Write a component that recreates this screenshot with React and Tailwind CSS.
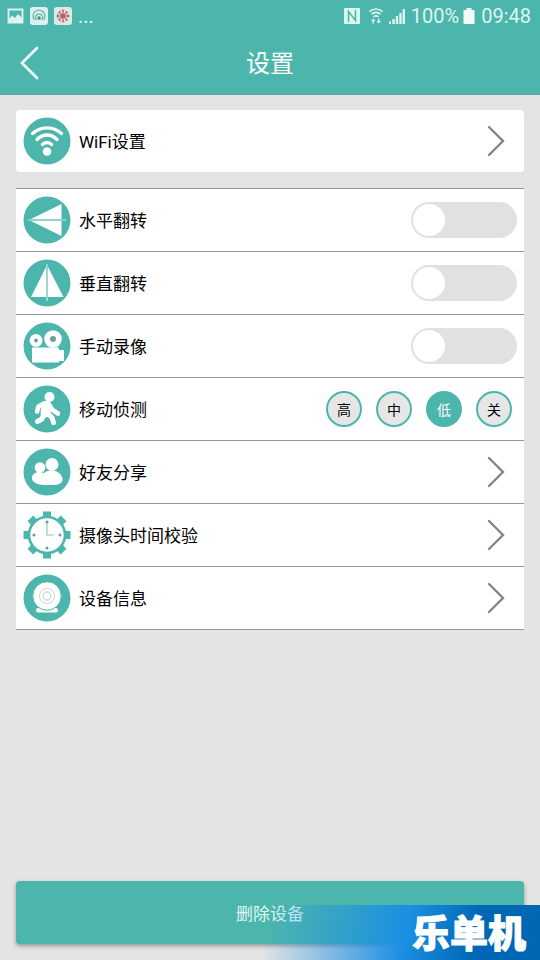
import { useState } from 'react';
import clsx from 'clsx';

const TEAL = '#4db6ac';

const Disc = ({ children }) => (
    <svg viewBox="0 0 48 48" className="size-12 shrink-0" aria-hidden="true">
        <circle cx="24" cy="24" r="23.5" fill={TEAL} />
        {children}
    </svg>
);

const WifiIcon = () => (
    <Disc>
        <g fill="none" stroke="#fff" strokeWidth="3.4" strokeLinecap="round">
            <path d="M9.5 16.5C18 9 30 9 38.5 16.5" />
            <path d="M14 22.5C20 16.500 28 16.500 34 22.500" />
            <path d="M19.500 27.500C22 24.800 26 24.800 28.500 27.500" />
        </g>
        <circle cx="24" cy="34.500" r="4.300" fill="#fff" />
    </Disc>
);

const FlipHorizontalIcon = () => (
    <Disc>
        <path d="M38.500 8V23H8zM38.500 40V25H8z" fill="#fff" />
        <path d="M5 24H43" stroke="#d5efec" strokeWidth="1" />
    </Disc>
);

const FlipVerticalIcon = () => (
    <Disc>
        <path d="M23 8V38H8zM25 8V38H40.500z" fill="#fff" />
        <path d="M24 5V42" stroke="#b9dedb" strokeWidth="1.600" />
    </Disc>
);

const RecordIcon = () => (
    <Disc>
        <circle cx="13" cy="18.500" r="6.500" fill="#fff" />
        <circle cx="30" cy="17" r="8.800" fill="#fff" />
        <circle cx="13" cy="18.500" r="1.900" fill="#6f9f9b" />
        <circle cx="30" cy="17" r="3" fill="#6f9f9b" />
        <path d="M9 25.500H36V28H41V39H36V40.500H9z" fill="#fff" />
    </Disc>
);

const MotionIcon = () => (
    <Disc>
        <circle cx="26.500" cy="12" r="5" fill="#fff" />
        <g fill="none" stroke="#fff" strokeLinecap="round" strokeLinejoin="round">
            <path d="M23.500 21L22.500 27.500" strokeWidth="10" />
            <path d="M21 18.500L15.500 21.500L14 26.500" strokeWidth="4.600" />
            <path d="M26 19.500L29.500 25L35 28.500" strokeWidth="4.600" />
            <path d="M20.500 29.500L19 34L14.500 36.500" strokeWidth="5" />
            <path d="M24.500 28.500L29 32.500L30.500 37.500" strokeWidth="5" />
        </g>
    </Disc>
);

const FriendsIcon = () => (
    <Disc>
        <circle cx="17" cy="19.500" r="5.300" fill="#fff" />
        <circle cx="29" cy="16.500" r="6.500" fill="#fff" />
        <path
            d="M9 30C9 26.500 12 24 16 24C18.500 24 20 25 21 25C23 23 26 22.500 29 22.500C35 22.500 39.500 27 39.500 31.500C39.500 35.500 35 37 30 37H21C13 36.500 9 34 9 30z"
            fill="#fff"
        />
    </Disc>
);

const ClockIcon = () => (
    <svg viewBox="0 0 48 48" className="size-12 shrink-0" aria-hidden="true">
        <g fill={TEAL}>
            {[0, 45, 90, 135, 180, 225, 270, 315].map((angle) => (
                <path key={angle} d="M20 .5H28V5L30.500 9H17.500L20 5z" transform={`rotate(${angle} 24 24)`} />
            ))}
        </g>
        <circle cx="24" cy="24" r="18" fill="#fff" stroke={TEAL} strokeWidth="2.600" />
        <g fill="#5f9f99">
            <circle cx="24" cy="11" r="1.500" />
            <circle cx="24" cy="37" r="1.500" />
            <circle cx="11" cy="24" r="1.500" />
            <circle cx="37" cy="24" r="1.500" />
        </g>
        <path d="M24 12V24H31" fill="none" stroke="#8ccbc5" strokeWidth="1.200" />
    </svg>
);

const CameraIcon = () => (
    <Disc>
        <rect x="13" y="34" width="22" height="4.500" rx="2.200" fill="#fff" />
        <circle cx="24" cy="22" r="14.300" fill="#fff" stroke={TEAL} strokeWidth="1" />
        <g fill="none" stroke="#cfd6d5">
            <circle cx="24" cy="22" r="7.500" strokeWidth="1" />
            <circle cx="24" cy="22" r="4" strokeWidth="1.300" />
        </g>
    </Disc>
);

const Chevron = () => (
    <svg viewBox="0 0 18 32" className="ml-auto mr-3 h-8 w-[18px]" aria-hidden="true">
        <path d="M2 2L16 16L2 30" fill="none" stroke="#858585" strokeWidth="2.400" strokeLinecap="round" />
    </svg>
);

const LinkRow = ({ icon: Icon, label }) => (
    <button type="button" className="flex h-full w-full items-center gap-2 px-[7px] text-left">
        <Icon />
        <span className="pt-[2px]">{label}</span>
        <Chevron />
    </button>
);

const SwitchRow = ({ icon: Icon, label }) => {
    const [on, setOn] = useState(false);

    return (
        <label className="flex h-full items-center gap-2 px-[7px]">
            <Icon />
            <span className="pt-[2px]">{label}</span>
            <input
                type="checkbox"
                role="switch"
                checked={on}
                onChange={() => setOn(!on)}
                className="ml-auto flex h-9 w-[106px] appearance-none items-center rounded-full bg-[#e1e1e1] px-[2px] before:size-8 before:rounded-full before:bg-white checked:justify-end checked:bg-[#4db6ac]"
            />
        </label>
    );
};

const LEVELS = ['高', '中', '低', '关'];

const LevelRow = ({ icon: Icon, label }) => {
    const [level, setLevel] = useState('低');

    return (
        <fieldset className="flex h-full items-center gap-2 px-[7px]" aria-label={label}>
            <Icon />
            <span className="pt-[2px]">{label}</span>
            <div className="ml-auto mr-[5px] flex gap-[14px]">
                {LEVELS.map((item) => (
                    <label
                        key={item}
                        className={clsx(
                            'relative flex size-9 items-center justify-center rounded-full border-2 border-[#4db6ac] pt-px text-sm',
                            level === item ? 'bg-[#4db6ac] text-white' : 'bg-[#e6e6e6] text-black'
                        )}
                    >
                        <input
                            type="radio"
                            name="level"
                            checked={level === item}
                            onChange={() => setLevel(item)}
                            className="sr-only"
                        />
                        {item}
                    </label>
                ))}
            </div>
        </fieldset>
    );
};

const StatusBar = () => (
    <div className="flex h-8 items-center justify-between pl-[7px] pr-[9px] text-xl text-[#dcf5f2]">
        <div className="flex items-center gap-[6px]">
            <svg viewBox="0 0 17 16" className="h-4 w-[17px]" aria-hidden="true">
                <path d="M1.500 1.500H15.500V14.500H1.500z" fill="none" stroke="#dcf5f2" strokeWidth="1.800" />
                <path d="M2 11L5 7.500L8 10L11 6L15 10V14H2z" fill="#dcf5f2" />
            </svg>
            <svg viewBox="0 0 18 18" className="size-[18px]" aria-hidden="true">
                <rect width="18" height="18" rx="3" fill="#dcf1ef" />
                <g fill="none" stroke="#6bb5ad" strokeWidth="1.300">
                    <path d="M4.500 13A6 6 0 1 1 13.500 13" />
                    <path d="M6.500 13A3.500 3.500 0 1 1 11.500 13" />
                </g>
                <circle cx="9" cy="11" r="1.800" fill="#3f938a" />
            </svg>
            <svg viewBox="0 0 18 18" className="size-[18px]" aria-hidden="true">
                <rect width="18" height="18" rx="3" fill="#dfe9e7" />
                <g stroke="#b5606b" strokeWidth="1.300" strokeLinecap="round">
                    <path d="M9 3V15M3 9H15M5 5L13 13M13 5L5 13" />
                </g>
                <circle cx="9" cy="9" r="5.500" fill="none" stroke="#b5606b" strokeWidth="1" strokeDasharray="2 1.500" />
                <circle cx="9" cy="9" r="2" fill="#b5606b" />
            </svg>
            <span className="leading-5">...</span>
        </div>
        <div className="flex items-center">
            <svg viewBox="0 0 16 16" className="mr-2 size-4" aria-hidden="true">
                <rect width="16" height="16" rx="1" fill="#dcf5f2" />
                <path d="M4.500 14V3.500L11.500 12.500V2" fill="none" stroke={TEAL} strokeWidth="1.500" />
            </svg>
            <svg viewBox="0 0 16 16" className="mr-[5px] size-4" aria-hidden="true">
                <g fill="none" stroke="#dcf5f2" strokeWidth="1.600">
                    <path d="M1.500 3.500Q8 -1.500 14.500 3.500" />
                    <path d="M3.500 6.200Q8 2.500 12.500 6.200" />
                    <path d="M5.500 8.800Q8 7 10.500 8.800" />
                </g>
                <path d="M5.300 10.500L7.500 13H6V15.500H4.500V13H3zM10.800 15.500L8.500 13H10V10.500H11.500V13H13z" fill="#dcf5f2" />
            </svg>
            <svg viewBox="0 0 16 16" className="mr-[6px] size-4" aria-hidden="true">
                <path d="M0 13.500H2V16H0zM3.300 11H5.700V16H3.300zM6.800 8H9.200V16H6.800zM10.300 5H12.700V16H10.300zM13.600 1H16V16H13.600z" fill="#dcf5f2" />
            </svg>
            <span>100%</span>
            <svg viewBox="0 0 12 16" className="ml-1 mr-[6px] h-4 w-3" aria-hidden="true">
                <path d="M3.500 0H8.500V2H11.500V16H.5V2H3.500z" fill="#f2fcfb" />
            </svg>
            <span>09:48</span>
        </div>
    </div>
);

const App = () => (
    <div className="relative flex min-h-screen flex-col overflow-hidden bg-[#e4e4e4] font-[Roboto,'Noto_Sans_CJK_SC',sans-serif] text-[17px] leading-7 text-black">
        <header className="bg-[#4db6ac]">
            <StatusBar />
            <div className="grid h-[63px] grid-cols-[1fr_auto_1fr] items-center border-b border-[#5da8a0] px-[19px]">
                <button type="button" aria-label="返回" className="justify-self-start">
                    <svg viewBox="0 0 20 34" className="h-[34px] w-5" aria-hidden="true">
                        <path d="M18 2L3 17L18 32" fill="none" stroke="#e9fbf9" strokeWidth="2.800" strokeLinecap="round" />
                    </svg>
                </button>
                <h1 className="pt-[2px] text-2xl text-white">设置</h1>
            </div>
        </header>

        <main className="flex flex-col gap-4 px-4 pb-8 pt-[15px]">
            <div className="h-[62px] rounded bg-white">
                <LinkRow icon={WifiIcon} label="WiFi设置" />
            </div>
            <ul className="border-b border-[#969696] bg-white">
                <li className="h-[63px] border-t border-[#969696]"><SwitchRow icon={FlipHorizontalIcon} label="水平翻转" /></li>
                <li className="h-[63px] border-t border-[#969696]"><SwitchRow icon={FlipVerticalIcon} label="垂直翻转" /></li>
                <li className="h-[63px] border-t border-[#969696]"><SwitchRow icon={RecordIcon} label="手动录像" /></li>
                <li className="h-[63px] border-t border-[#969696]"><LevelRow icon={MotionIcon} label="移动侦测" /></li>
                <li className="h-[63px] border-t border-[#969696]"><LinkRow icon={FriendsIcon} label="好友分享" /></li>
                <li className="h-[63px] border-t border-[#969696]"><LinkRow icon={ClockIcon} label="摄像头时间校验" /></li>
                <li className="h-[63px] border-t border-[#969696]"><LinkRow icon={CameraIcon} label="设备信息" /></li>
            </ul>
        </main>

        <footer className="mt-auto px-4 pb-4">
            <button type="button" className="h-[63px] w-full rounded bg-[#4db6ac] pt-[2px] text-[#dff6f3] shadow-[0_2px_4px_rgba(0,0,0,0.35)]">
                删除设备
            </button>
        </footer>

        {/* site mark over the corner */}
        <div className="pointer-events-none absolute bottom-0 right-0 flex h-[55px] w-[320px] items-center justify-end bg-linear-100 from-[#1e90e4]/0 from-15% via-[#1b8fe2] via-58% to-[#0067b4] to-80% pr-[14px]">
            <span className="pt-[3px] text-[38px] font-black leading-none text-white [-webkit-text-stroke:1px_white]">乐单机</span>
        </div>
    </div>
);

export default App;
